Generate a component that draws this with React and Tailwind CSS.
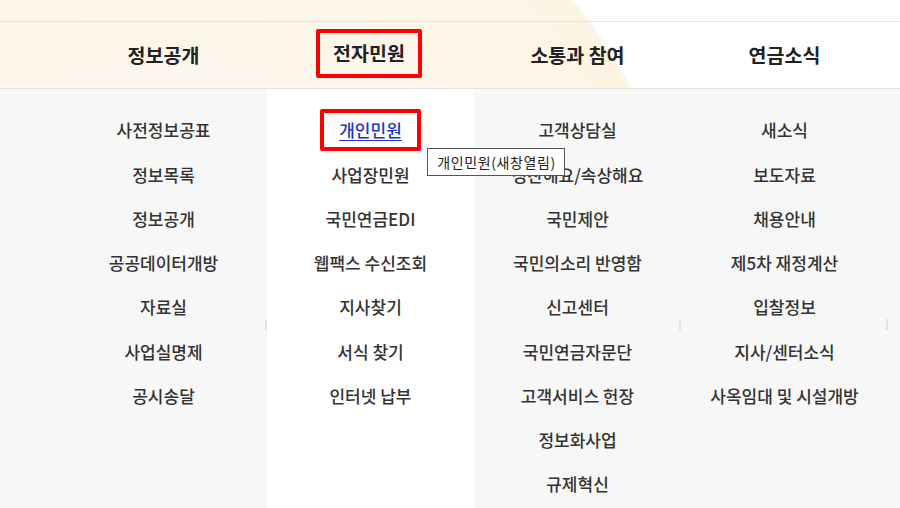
import React from 'react';

const menus = [
  {
    title: '정보공개',
    items: ['사전정보공표', '정보목록', '정보공개', '공공데이터개방', '자료실', '사업실명제', '공시송달'],
    mark: true,
  },
  {
    title: '전자민원',
    items: ['개인민원', '사업장민원', '국민연금EDI', '웹팩스 수신조회', '지사찾기', '서식 찾기', '인터넷 납부'],
    active: true,
  },
  {
    title: '소통과 참여',
    items: ['고객상담실', '칭찬해요/속상해요', '국민제안', '국민의소리 반영함', '신고센터', '국민연금자문단', '고객서비스 헌장', '정보화사업', '규제혁신'],
    mark: true,
  },
  {
    title: '연금소식',
    items: ['새소식', '보도자료', '채용안내', '제5차 재정계산', '입찰정보', '지사/센터소식', '사옥임대 및 시설개방'],
    mark: true,
  },
];

export default function App() {
  return (
    <div
      className="relative w-[900px] h-[508px] overflow-hidden bg-[#f7f7f7] text-[#333]"
      style={{ fontFamily: '"Noto Sans CJK KR", "Noto Sans", sans-serif' }}
    >
      {/* top area with the cream circle */}
      <div className="bg-[radial-gradient(circle_at_170px_330px,#fbf9f5_0px,#fdf4e4_519px,#ffffff_522px)]">
        <div className="h-[22px] border-b border-[#e4e4e4]" />
        <div className="h-[67px] border-b border-[#e2e2e2] pl-[60px] grid grid-cols-[repeat(4,207px)]">
          {menus.map((m) => (
            <div key={m.title} className="flex items-center justify-center">
              {m.active ? (
                <span className="-mt-[4px] ml-[-3px] border-4 border-[#ff0000] rounded-[2px] px-[13px] pt-[7px] pb-[8px] text-[19.5px] font-bold text-[#222] leading-[26px]">
                  {m.title}
                </span>
              ) : (
                <span className="text-[19.5px] font-bold text-[#222] leading-[26px]">{m.title}</span>
              )}
            </div>
          ))}
        </div>
      </div>

      {/* dropdown columns */}
      <div className="pl-[60px] grid grid-cols-[repeat(4,207px)] h-[419px]">
        {menus.map((m) => (
          <div key={m.title} className={`relative pt-[19px] ${m.active ? 'bg-white' : ''}`}>
            {m.mark && <div className="absolute right-0 top-[230px] w-[2px] h-[11px] bg-[#e2e2e2]" />}
            <ul className="flex flex-col items-center">
              {m.items.map((item, i) =>
                m.active && i === 0 ? (
                  <li key={item} className="relative h-[44.25px] flex items-center">
                    <a
                      href="#"
                      className="border-4 border-[#ff0000] rounded-[2px] px-[15px] py-[4px] text-[17px] font-medium text-[#2233cc] underline underline-offset-[3px] leading-[26px]"
                    >
                      {item}
                    </a>
                    <div className="absolute left-[107px] top-[40px] z-10 whitespace-nowrap bg-white border border-[#555] pl-[9px] pr-[8px] py-[3px] text-[14px] tracking-[0.6px] text-[#222] leading-[20px]">
                      개인민원(새창열림)
                    </div>
                  </li>
                ) : (
                  <li key={item} className="h-[44.25px] flex items-center text-[17px] font-medium text-[#333]">
                    {item}
                  </li>
                )
              )}
            </ul>
          </div>
        ))}
      </div>
    </div>
  );
}
